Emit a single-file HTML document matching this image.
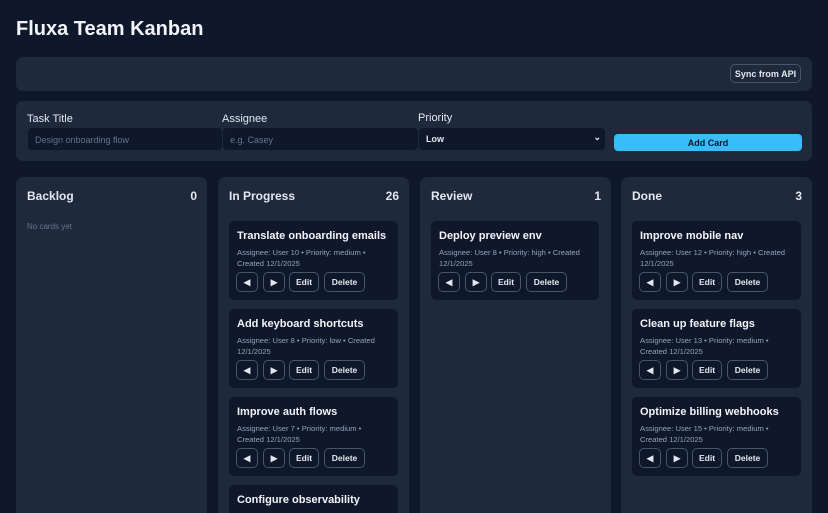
<!DOCTYPE html>
<html style="overflow:hidden;height:513px"><head><meta charset="utf-8"><style>
*{box-sizing:border-box;margin:0;padding:0}
body{width:828px;height:513px;overflow:hidden;background:#0f172a;color:#e2e8f0;font-family:"Liberation Sans",Arial,sans-serif;position:relative}
h1{position:absolute;left:16px;top:18px;font-size:20px;font-weight:bold;color:#f1f5f9}
.panel{position:absolute;background:#1e293b;border-radius:7px}
.btn{position:absolute;border:1px solid #475569;border-radius:5px;color:#e2e8f0;font-size:9px;font-weight:bold;display:flex;align-items:center;justify-content:center;background:#0f172a}
label{position:absolute;font-size:11px;color:#e2e8f0}
.inp{position:absolute;top:127px;height:24px;background:#0f172a;border:1px solid #1e293b;border-radius:5px;font-size:9px;color:#64748b;padding:7px 0 0 7px}
.col{position:absolute;top:177px;width:191px;height:336px;background:#1e293b;border-radius:7px 7px 0 0;overflow:hidden}
.ch{position:absolute;left:11px;right:10px;top:12px;font-size:12px;font-weight:bold;display:flex;justify-content:space-between}
.card{position:absolute;left:11px;width:169px;height:79px;background:#0f172a;border-radius:5px}
.ct{position:absolute;left:8px;top:9px;font-size:11px;font-weight:bold;color:#f1f5f9;white-space:nowrap}
.cm{position:absolute;left:8px;top:26px;width:150px;font-size:7.6px;line-height:11px;color:#94a3b8}
.b{position:absolute;top:51px;height:20px;border:1px solid #475569;border-radius:5px;font-size:8.5px;font-weight:bold;display:flex;align-items:center;justify-content:center;color:#e2e8f0}
</style></head><body>
<h1>Fluxa Team Kanban</h1>
<div class="panel" style="left:16px;top:57px;width:796px;height:34px"></div>
<div class="btn" style="left:730px;top:64px;width:71px;height:19px;background:#1e293b">Sync from API</div>
<div class="panel" style="left:16px;top:101px;width:796px;height:60px"></div>
<label style="left:27px;top:113px">Task Title</label>
<label style="left:222px;top:113px">Assignee</label>
<label style="left:418px;top:112px">Priority</label>
<div class="inp" style="left:27px;width:196px">Design onboarding flow</div>
<div class="inp" style="left:222px;width:197px">e.g. Casey</div>
<div class="inp" style="left:418px;width:188px;color:#e2e8f0;font-weight:bold;padding-top:6px">Low<span style="position:absolute;right:4px;top:4px;font-size:9px">⌄</span></div>
<div style="position:absolute;left:614px;top:134px;width:188px;height:17px;background:#38bdf8;border-radius:4px;color:#0f172a;font-size:9px;font-weight:bold;display:flex;align-items:center;justify-content:center">Add Card</div>

<div class="col" style="left:16px"><div class="ch"><span>Backlog</span><span>0</span></div>
<div style="position:absolute;left:11px;top:45px;font-size:8px;color:#64748b">No cards yet</div></div>

<div class="col" style="left:218px"><div class="ch"><span>In Progress</span><span>26</span></div>
<div class="card" style="top:44px"><div class="ct">Translate onboarding emails</div><div class="cm">Assignee: User 10 • Priority: medium • Created 12/1/2025</div><div class="b" style="left:7px;width:22px">◀</div><div class="b" style="left:34px;width:22px">▶</div><div class="b" style="left:60px;width:30px">Edit</div><div class="b" style="left:95px;width:41px">Delete</div></div>
<div class="card" style="top:132px"><div class="ct">Add keyboard shortcuts</div><div class="cm">Assignee: User 8 • Priority: low • Created 12/1/2025</div><div class="b" style="left:7px;width:22px">◀</div><div class="b" style="left:34px;width:22px">▶</div><div class="b" style="left:60px;width:30px">Edit</div><div class="b" style="left:95px;width:41px">Delete</div></div>
<div class="card" style="top:220px"><div class="ct">Improve auth flows</div><div class="cm">Assignee: User 7 • Priority: medium • Created 12/1/2025</div><div class="b" style="left:7px;width:22px">◀</div><div class="b" style="left:34px;width:22px">▶</div><div class="b" style="left:60px;width:30px">Edit</div><div class="b" style="left:95px;width:41px">Delete</div></div>
<div class="card" style="top:308px;height:28px;border-radius:5px 5px 0 0"><div class="ct">Configure observability</div></div>
</div>

<div class="col" style="left:420px"><div class="ch"><span>Review</span><span>1</span></div>
<div class="card" style="top:44px;width:168px"><div class="ct">Deploy preview env</div><div class="cm">Assignee: User 8 • Priority: high • Created 12/1/2025</div><div class="b" style="left:7px;width:22px">◀</div><div class="b" style="left:34px;width:22px">▶</div><div class="b" style="left:60px;width:30px">Edit</div><div class="b" style="left:95px;width:41px">Delete</div></div></div>

<div class="col" style="left:621px"><div class="ch"><span>Done</span><span>3</span></div>
<div class="card" style="top:44px"><div class="ct">Improve mobile nav</div><div class="cm">Assignee: User 12 • Priority: high • Created 12/1/2025</div><div class="b" style="left:7px;width:22px">◀</div><div class="b" style="left:34px;width:22px">▶</div><div class="b" style="left:60px;width:30px">Edit</div><div class="b" style="left:95px;width:41px">Delete</div></div>
<div class="card" style="top:132px"><div class="ct">Clean up feature flags</div><div class="cm">Assignee: User 13 • Priority: medium • Created 12/1/2025</div><div class="b" style="left:7px;width:22px">◀</div><div class="b" style="left:34px;width:22px">▶</div><div class="b" style="left:60px;width:30px">Edit</div><div class="b" style="left:95px;width:41px">Delete</div></div>
<div class="card" style="top:220px"><div class="ct">Optimize billing webhooks</div><div class="cm">Assignee: User 15 • Priority: medium • Created 12/1/2025</div><div class="b" style="left:7px;width:22px">◀</div><div class="b" style="left:34px;width:22px">▶</div><div class="b" style="left:60px;width:30px">Edit</div><div class="b" style="left:95px;width:41px">Delete</div></div>
</div>
</body></html>
